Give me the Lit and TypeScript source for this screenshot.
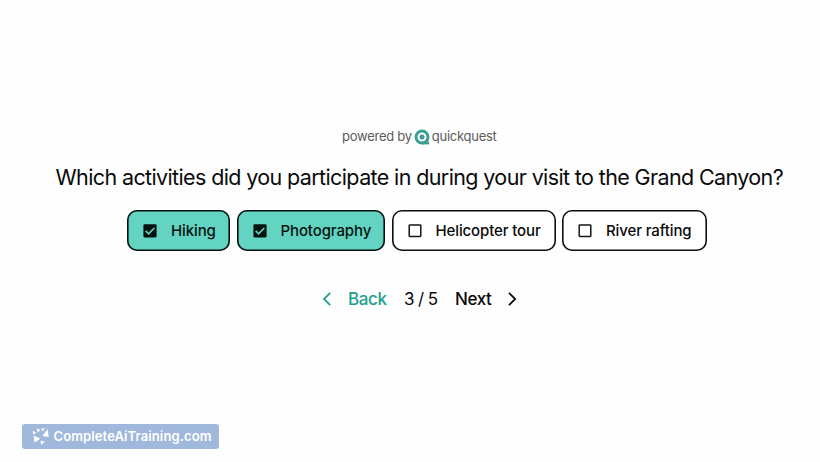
import { LitElement, html, svg, css } from "lit";
import { customElement, property } from "lit/decorators.js";
import { classMap } from "lit/directives/class-map.js";

@customElement("choice-chip")
class ChoiceChip extends LitElement {
  @property() label = "";
  @property({ type: Boolean }) checked = false;

  static styles = css`
    :host {
      display: block;
    }
    .chip {
      box-sizing: border-box;
      width: 100%;
      height: 41px;
      display: flex;
      align-items: center;
      padding: 0 0 0 15px;
      gap: 13px;
      box-shadow: inset 0 0 0 1.6px #0b0f0e;
      border-radius: 10px;
      background: #fff;
      font: 500 15px/20px Inter, "Liberation Sans", sans-serif;
      letter-spacing: -0.12px;
      color: #0a0a0a;
      white-space: nowrap;
    }
    .on {
      background: #62d4c1;
      color: #04120f;
    }
    svg {
      display: block;
      flex: none;
    }
  `;

  render() {
    return html`<div class=${classMap({ chip: true, on: this.checked })}>
      <svg width="16" height="16" viewBox="0 0 16 16" fill="none">
        ${this.checked
          ? svg`<rect x="1.4" y="1.2" width="13.2" height="13.2" rx="1.3" fill="#04120f"/>
              <path d="M3.7 7.9 6.6 10.8 12.3 5" stroke="#62d4c1" stroke-width="1.6"/>`
          : svg`<rect x="2.2" y="1.9" width="11.6" height="11.6" rx=".7" stroke="#151515" stroke-width="1.5"/>`}
      </svg>
      <span>${this.label}</span>
    </div>`;
  }
}

@customElement("app-root")
class AppRoot extends LitElement {
  static styles = css`
    :host {
      display: block;
      width: 820px;
      height: 462px;
      overflow: hidden;
      background: #fefefe;
      font-family: Inter, "Liberation Sans", sans-serif;
      color: #0a0a0a;
    }
    .page {
      box-sizing: border-box;
      height: 462px;
      padding-top: 126px;
      display: flex;
      flex-direction: column;
      white-space: nowrap;
    }
    .powered {
      display: flex;
      align-items: center;
      height: 20px;
      margin-left: 342px;
      font-size: 13px;
      line-height: 20px;
      letter-spacing: -0.26px;
      color: #5c5c5c;
    }
    .powered svg {
      margin: 1px 1.5px 0 2.5px;
    }
    h1 {
      margin: 16px 0 0 55.5px;
      font-size: 21.5px;
      line-height: 30px;
      font-weight: 400;
      letter-spacing: -0.62px;
    }
    .choices {
      margin: 18px 0 0 127px;
      display: grid;
      grid-template-columns: 103px 148.5px 164px 144.5px;
      column-gap: 6.5px;
    }
    .nav {
      margin: 36px 0 0 320px;
      height: 24px;
      display: flex;
      align-items: center;
      font-size: 17px;
      line-height: 24px;
      font-weight: 500;
      letter-spacing: -0.4px;
    }
    .nav svg {
      margin-top: -1px;
    }
    .back {
      display: flex;
      align-items: center;
      width: 84px;
      gap: 14px;
      color: #21a08a;
    }
    .count {
      width: 51px;
      font-weight: 400;
      letter-spacing: -0.6px;
    }
    .next {
      display: flex;
      align-items: center;
      gap: 13.5px;
    }
    .badge {
      box-sizing: border-box;
      margin: auto 0 13px 21.5px;
      width: 197px;
      height: 25px;
      display: flex;
      align-items: center;
      padding: 0 0 1px 9px;
      gap: 3px;
      border-radius: 3px;
      background: #9fb8db;
      color: #fff;
      font-size: 13px;
      font-weight: 600;
      letter-spacing: 0.11px;
    }
    svg {
      display: block;
      flex: none;
    }
  `;

  render() {
    return html`<div class="page">
      <div class="powered">
        <span>powered by</span>
        <svg width="16" height="16" viewBox="0 0 16 16" fill="none">
          <circle cx="8" cy="8" r="6" stroke="#3a9e91" stroke-width="2.9" />
          <circle cx="8" cy="8" r="2.5" fill="#3a9e91" />
          <path d="M8 12.6h7.2v2.8H8z" fill="#3a9e91" />
        </svg>
        <span>quickquest</span>
      </div>
      <h1>Which activities did you participate in during your visit to the Grand Canyon?</h1>
      <div class="choices">
        <choice-chip label="Hiking" checked></choice-chip>
        <choice-chip label="Photography" checked></choice-chip>
        <choice-chip label="Helicopter tour"></choice-chip>
        <choice-chip label="River rafting"></choice-chip>
      </div>
      <div class="nav">
        <div class="back">
          <svg width="14" height="16" viewBox="0 0 14 16" fill="none">
            <path d="M10.2 1.8 4 8l6.2 6.2" stroke="#21a08a" stroke-width="1.8" />
          </svg>
          <span>Back</span>
        </div>
        <span class="count">3 / 5</span>
        <div class="next">
          <span>Next</span>
          <svg width="14" height="16" viewBox="0 0 14 16" fill="none">
            <path d="M4 1.8 10.2 8 4 14.2" stroke="#0a0a0a" stroke-width="1.8" />
          </svg>
        </div>
      </div>
      <div class="badge">
        <svg width="20" height="20" viewBox="0 0 20 20" fill="#fff">
          <path d="M2.6 9.4 9.4 12.8 3.4 16.6zM11.4 10 16.6 3 17.8 11zM9.4 14.8 13.8 15.6 10.2 19zM5.4 2.6 9.4 3.8 7 6.6zM1.6 4.8 5.4 6.8 2.4 8.4zM10.4 2.2 14 2.6 11.2 5.6z" />
        </svg>
        <span>CompleteAiTraining.com</span>
      </div>
    </div>`;
  }
}
